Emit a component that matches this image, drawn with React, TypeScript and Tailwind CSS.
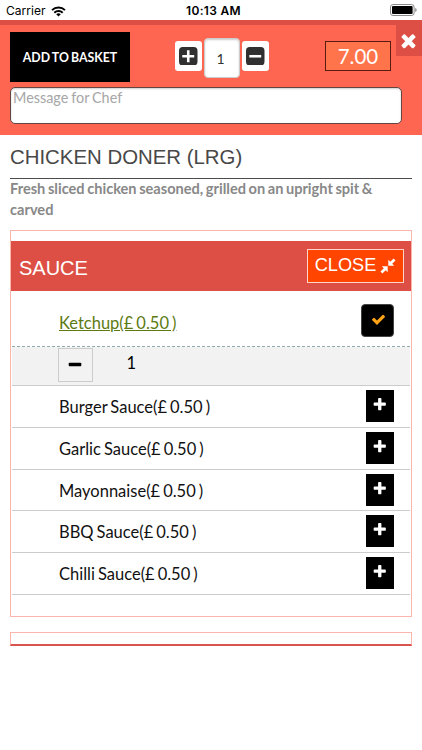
import type { ReactNode } from "react";

function Glyph({ d, className }: { d: string; className: string }) {
  return (
    <svg viewBox="0 0 1792 1792" fill="currentColor" className={className}>
      <path d={d} />
    </svg>
  );
}

const PLUS =
  "M1600 736v192q0 40-28 68t-68 28h-416v416q0 40-28 68t-68 28h-192q-40 0-68-28t-28-68v-416h-416q-40 0-68-28t-28-68v-192q0-40 28-68t68-28h416v-416q0-40 28-68t68-28h192q40 0 68 28t28 68v416h416q40 0 68 28t28 68z";
const MINUS = "M1600 736v192q0 40-28 68t-68 28h-1216q-40 0-68-28t-28-68v-192q0-40 28-68t68-28h1216q40 0 68 28t28 68z";
const TIMES =
  "M1490 1322q0 40-28 68l-136 136q-28 28-68 28t-68-28l-294-294-294 294q-28 28-68 28t-68-28l-136-136q-28-28-28-68t28-68l294-294-294-294q-28-28-28-68t28-68l136-136q28-28 68-28t68 28l294 294 294-294q28-28 68-28t68 28l136 136q28 28 28 68t-28 68l-294 294 294 294q28 28 28 68z";
const CHECK =
  "M1671 566q0 40-28 68l-724 724-136 136q-28 28-68 28t-68-28l-136-136-362-362q-28-28-28-68t28-68l136-136q28-28 68-28t68 28l294 295 656-657q28-28 68-28t68 28l136 136q28 28 28 68z";

function StepButton({ children }: { children: ReactNode }) {
  return (
    <button className="mt-[3px] flex h-[30px] w-[27px] items-center justify-center rounded-[3px] bg-white">
      <svg viewBox="0 0 18 18" className="h-[18.5px] w-[18.5px]">
        <rect width="18" height="18" rx="3.6" fill="#303030" />
        {children}
      </svg>
    </button>
  );
}

function StatusBar() {
  return (
    <div className="grid h-5 grid-cols-3 items-center bg-white font-['Inter','Liberation_Sans',sans-serif] text-black">
      <div className="flex items-center pl-[6px] pt-[2px]">
        <span className="w-[45px] whitespace-nowrap text-[12px] leading-none tracking-[0.05px]">Carrier</span>
        <svg viewBox="0 0 15 11" className="h-[11px] w-[15px]" fill="none" stroke="#000" strokeWidth="1.9">
          <path d="M1 4.2a9.2 9.2 0 0 1 13 0M3.3 6.7a6 6 0 0 1 8.4 0" />
          <path d="M5.2 8.3a3.25 3.25 0 0 1 4.6 0L7.5 10.6z" fill="#000" stroke="none" />
        </svg>
      </div>
      <span className="pl-[5px] pt-[2px] text-center text-[12px] font-semibold leading-none tracking-[0.3px]">10:13 AM</span>
      <svg viewBox="0 0 27 12" className="mr-[5px] h-[12px] w-[27px] justify-self-end">
        <rect x=".5" y=".5" width="23.6" height="11" rx="2.5" fill="#fff" stroke="#8a8a8a" />
        <rect x="2" y="2" width="20.6" height="8" rx="1" />
        <path d="M25.2 4v4q1.5-.6 1.5-2t-1.5-2z" fill="#8a8a8a" />
      </svg>
    </div>
  );
}

function OrderHeader() {
  return (
    <header className="h-[114.5px] border-t-[5px] border-[#dd4f45] bg-[#ff6651]">
      <div className="flex h-[62px] items-start">
        <button className="ml-[10px] mt-[7px] h-[49.5px] w-[120px] whitespace-nowrap bg-black pt-[2px] text-[12.3px] font-bold [word-spacing:-0.8px] text-white">
          ADD TO BASKET
        </button>
        <div className="ml-[45px] mt-[13px] flex">
          <StepButton>
            <path d="M9 3.2v11.6M3.2 9h11.6" stroke="#fff" strokeWidth="2.5" />
          </StepButton>
          <div className="ml-[2px] flex h-[40px] w-[36px] items-center justify-center rounded-[4px] border border-[#ccc] bg-white pr-[3px] text-[14px] text-[#333] shadow-[inset_0_1px_2px_rgba(0,0,0,0.2)]">
            1
          </div>
          <div className="ml-[2px]">
            <StepButton>
              <path d="M3.2 9h11.6" stroke="#fff" strokeWidth="2.5" />
            </StepButton>
          </div>
        </div>
        <div className="ml-[56px] mt-[16px] flex h-[30px] w-[66px] items-center justify-center border border-[#5b1c10] bg-[#ff744a] text-[20.5px] text-white">
          7.00
        </div>
        <button className="ml-auto flex h-[31px] w-[26px] items-center justify-center bg-[#dd4f45] pr-[2px] text-white">
          <Glyph d={TIMES} className="h-[21px] w-[21px] shrink-0" />
        </button>
      </div>
      <textarea
        readOnly
        placeholder="Message for Chef"
        className="ml-[10px] block h-[37px] w-[391.5px] resize-none overflow-hidden rounded-[5px] border border-[#62463f] bg-white px-[2px] text-[14.4px] leading-[20px] [word-spacing:-0.8px] shadow-[inset_0_1px_2px_rgba(0,0,0,0.2)] placeholder:text-[#a6a6a6]"
      />
    </header>
  );
}

const SAUCES = ["Burger Sauce", "Garlic Sauce", "Mayonnaise", "BBQ Sauce", "Chilli Sauce"];

function SauceRow({ name }: { name: string }) {
  return (
    <div className="flex h-[41.8px] items-start justify-between border-b border-[#ccc] pl-[47px] pr-[16px]">
      <span className="pt-[10px] text-[16.5px] leading-[22px] [word-spacing:-1.2px] text-[#111]">{name}(£ 0.50 )</span>
      <button className="mt-[4px] flex h-[32px] w-[28.5px] items-start justify-center bg-black pt-[7px] text-white">
        <Glyph d={PLUS} className="h-[15.5px] w-[15.5px]" />
      </button>
    </div>
  );
}

export default function App() {
  return (
    <div className="h-[750px] w-[422px] overflow-hidden bg-white font-['Lato','Liberation_Sans',sans-serif]">
      <StatusBar />
      <OrderHeader />
      <main className="pl-[10px] pr-[10px]">
        <h1 className="h-[44.5px] border-b-[1.5px] border-[#4c4c4c] pt-[9.5px] font-['Liberation_Sans',sans-serif] text-[20.4px] leading-[26px] text-[#484848]">
          CHICKEN DONER (LRG)
        </h1>
        <p className="h-[51px] pr-[20px] text-[14.6px] font-bold leading-[20.5px] [word-spacing:-1px] text-[#888]">
          Fresh sliced chicken seasoned, grilled on an upright spit &amp; carved
        </p>
        <section className="h-[387px] border border-[#fab5ac] pt-[10px]">
          <div className="flex h-[49.5px] items-center justify-between bg-[#dd4f45] pl-[8px] pr-[7px] font-['Liberation_Sans',sans-serif] text-white">
            <h2 className="pt-[4px] text-[20px]">SAUCE</h2>
            <button className="flex h-[34px] w-[97px] items-center justify-center gap-[4px] border border-[#ffd5c9] bg-[#ff4500] text-[18.2px]">
              CLOSE
              <svg viewBox="0 0 16 16" className="h-[16px] w-[16px]" fill="currentColor">
                <path d="M8.3 1.8v5.9h5.9l-2-2 3.3-3.3-1.9-1.9-3.3 3.3zM7.7 14.2V8.3H1.8l2 2L.5 13.6l1.9 1.9 3.3-3.3z" />
              </svg>
            </button>
          </div>
          <div className="mx-px">
            <div className="flex h-[56px] items-start justify-between border-b border-dashed border-[#8fabb0] pl-[47px] pr-[16px]">
              <span className="pt-[21.5px] text-[16.5px] leading-[22px] [word-spacing:-1.2px] text-[#5c7a12] underline">
                Ketchup(£ 0.50 )
              </span>
              <button className="mt-[13px] flex h-[33.5px] w-[33.5px] items-start justify-center rounded-[4px] border border-[#444] bg-black pl-[3px] pt-[7px] text-[#ffa317]">
                <Glyph d={CHECK} className="h-[15px] w-[15px]" />
              </button>
            </div>
            <div className="flex h-[39.5px] items-start border-b border-[#ccc] bg-[#f2f2f2] pl-[46px]">
              <button className="mt-px flex h-[34px] w-[34.5px] items-center justify-center border border-[#ccc] text-black">
                <Glyph d={MINUS} className="h-[16px] w-[16px]" />
              </button>
              <span className="ml-[34px] pt-[5px] text-[16.5px] leading-[22px] text-black">1</span>
            </div>
            {SAUCES.map((name) => (
              <SauceRow key={name} name={name} />
            ))}
          </div>
        </section>
        <div className="mt-[15px] h-[14px] border border-b-2 border-[#fab5ac] border-b-[#d9534f]" />
      </main>
    </div>
  );
}
